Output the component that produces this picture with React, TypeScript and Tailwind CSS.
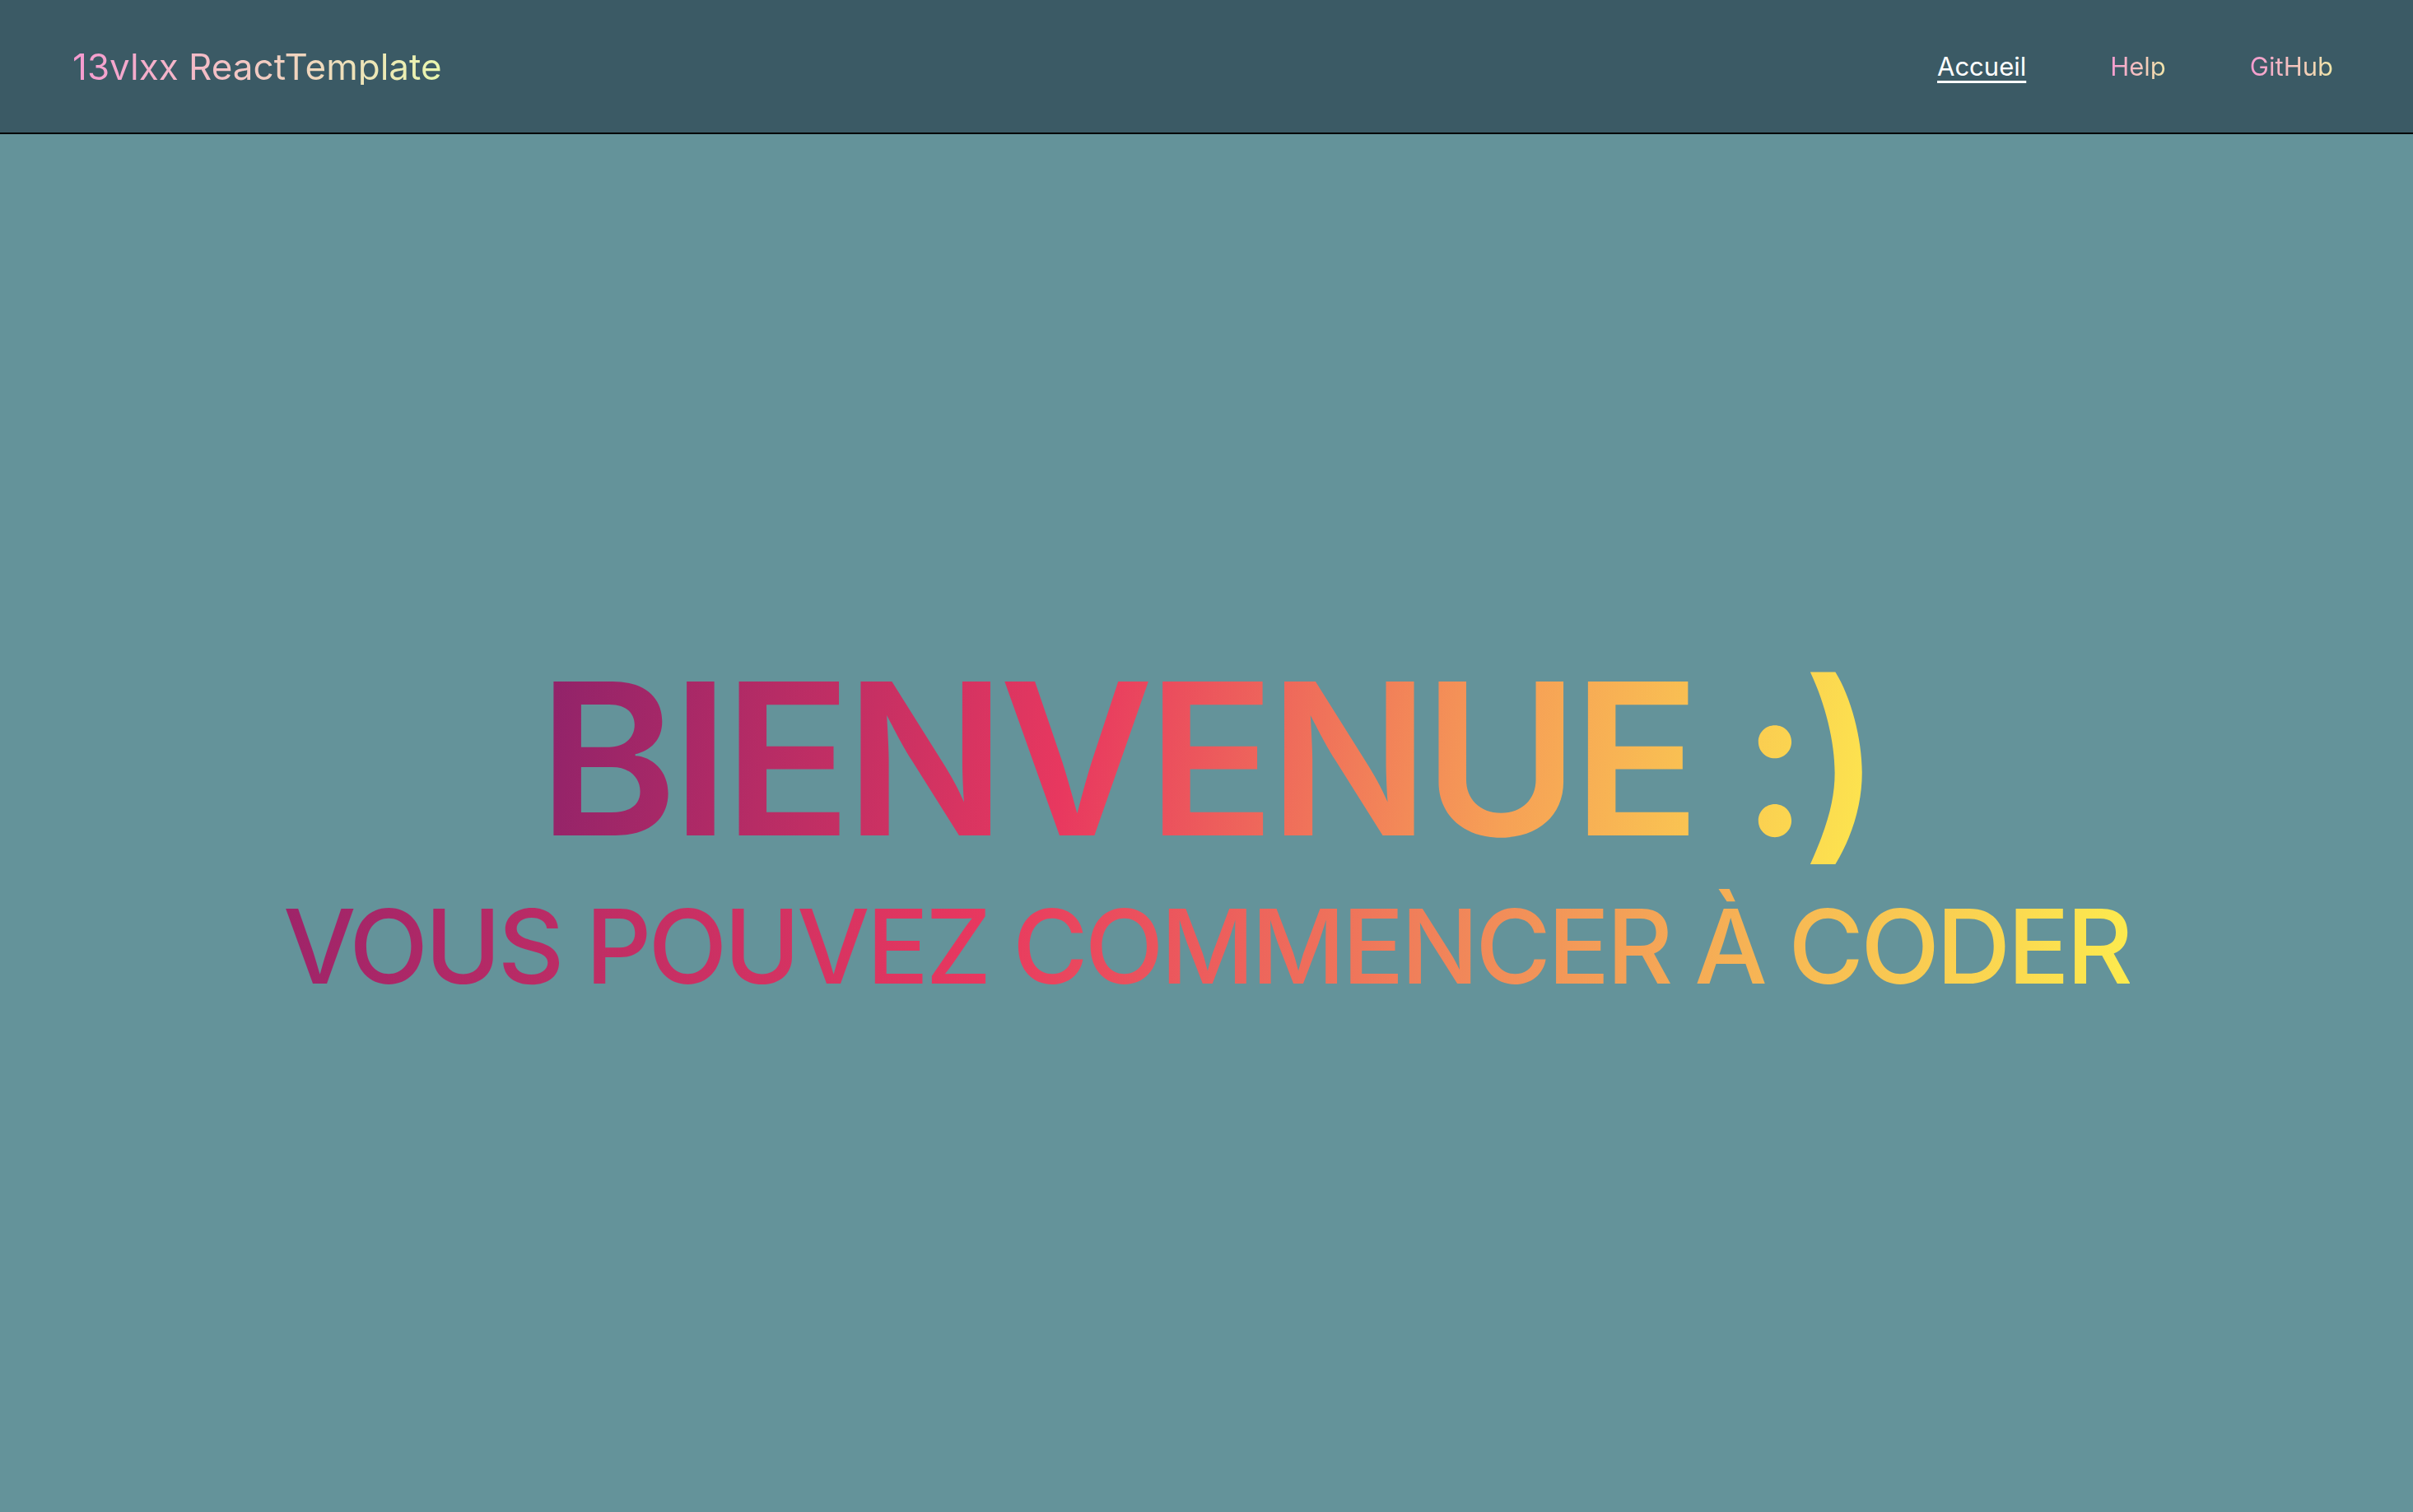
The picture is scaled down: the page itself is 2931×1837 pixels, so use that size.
import React from "react";

const font = { fontFamily: 'Inter, "Noto Sans", sans-serif' };

export default function App() {
  return (
    <div className="flex h-screen w-full flex-col bg-[#64939a]" style={font}>
      <header className="flex h-[163px] shrink-0 items-center justify-between border-b-2 border-black bg-[#3b5a65] pl-[88px] pr-[97px]">
        <a className="bg-linear-to-r from-[#f59ad0] to-[#e9f7ae] bg-clip-text text-[44px] leading-none text-transparent">
          13vlxx ReactTemplate
        </a>
        <nav className="flex items-center gap-[102px] text-[31px] leading-none">
          <a className="text-white underline decoration-[3px] underline-offset-[6px]">Accueil</a>
          <a className="bg-linear-to-r from-[#f59ad0] to-[#f0e6a8] bg-clip-text text-transparent">Help</a>
          <a className="bg-linear-to-r from-[#f59ad0] to-[#f0e6a8] bg-clip-text text-transparent">GitHub</a>
        </nav>
      </header>
      <main className="flex flex-1 flex-col items-center justify-center pb-[17px]">
        <h1 className="bg-[linear-gradient(100deg,#8e226a_0%,#e8385f_40%,#f6a056_72%,#fde84e_100%)] bg-clip-text text-[257px] font-semibold leading-[316px] tracking-[-0.03em] text-transparent">
          BIENVENUE :)
        </h1>
        <h2 className="bg-[linear-gradient(95deg,#9e2469_0%,#e8385f_38%,#f39a58_70%,#fdeb4e_100%)] bg-clip-text text-[125px] font-medium leading-[140px] tracking-[-0.031em] text-transparent">
          VOUS POUVEZ COMMENCER À CODER
        </h2>
      </main>
    </div>
  );
}
